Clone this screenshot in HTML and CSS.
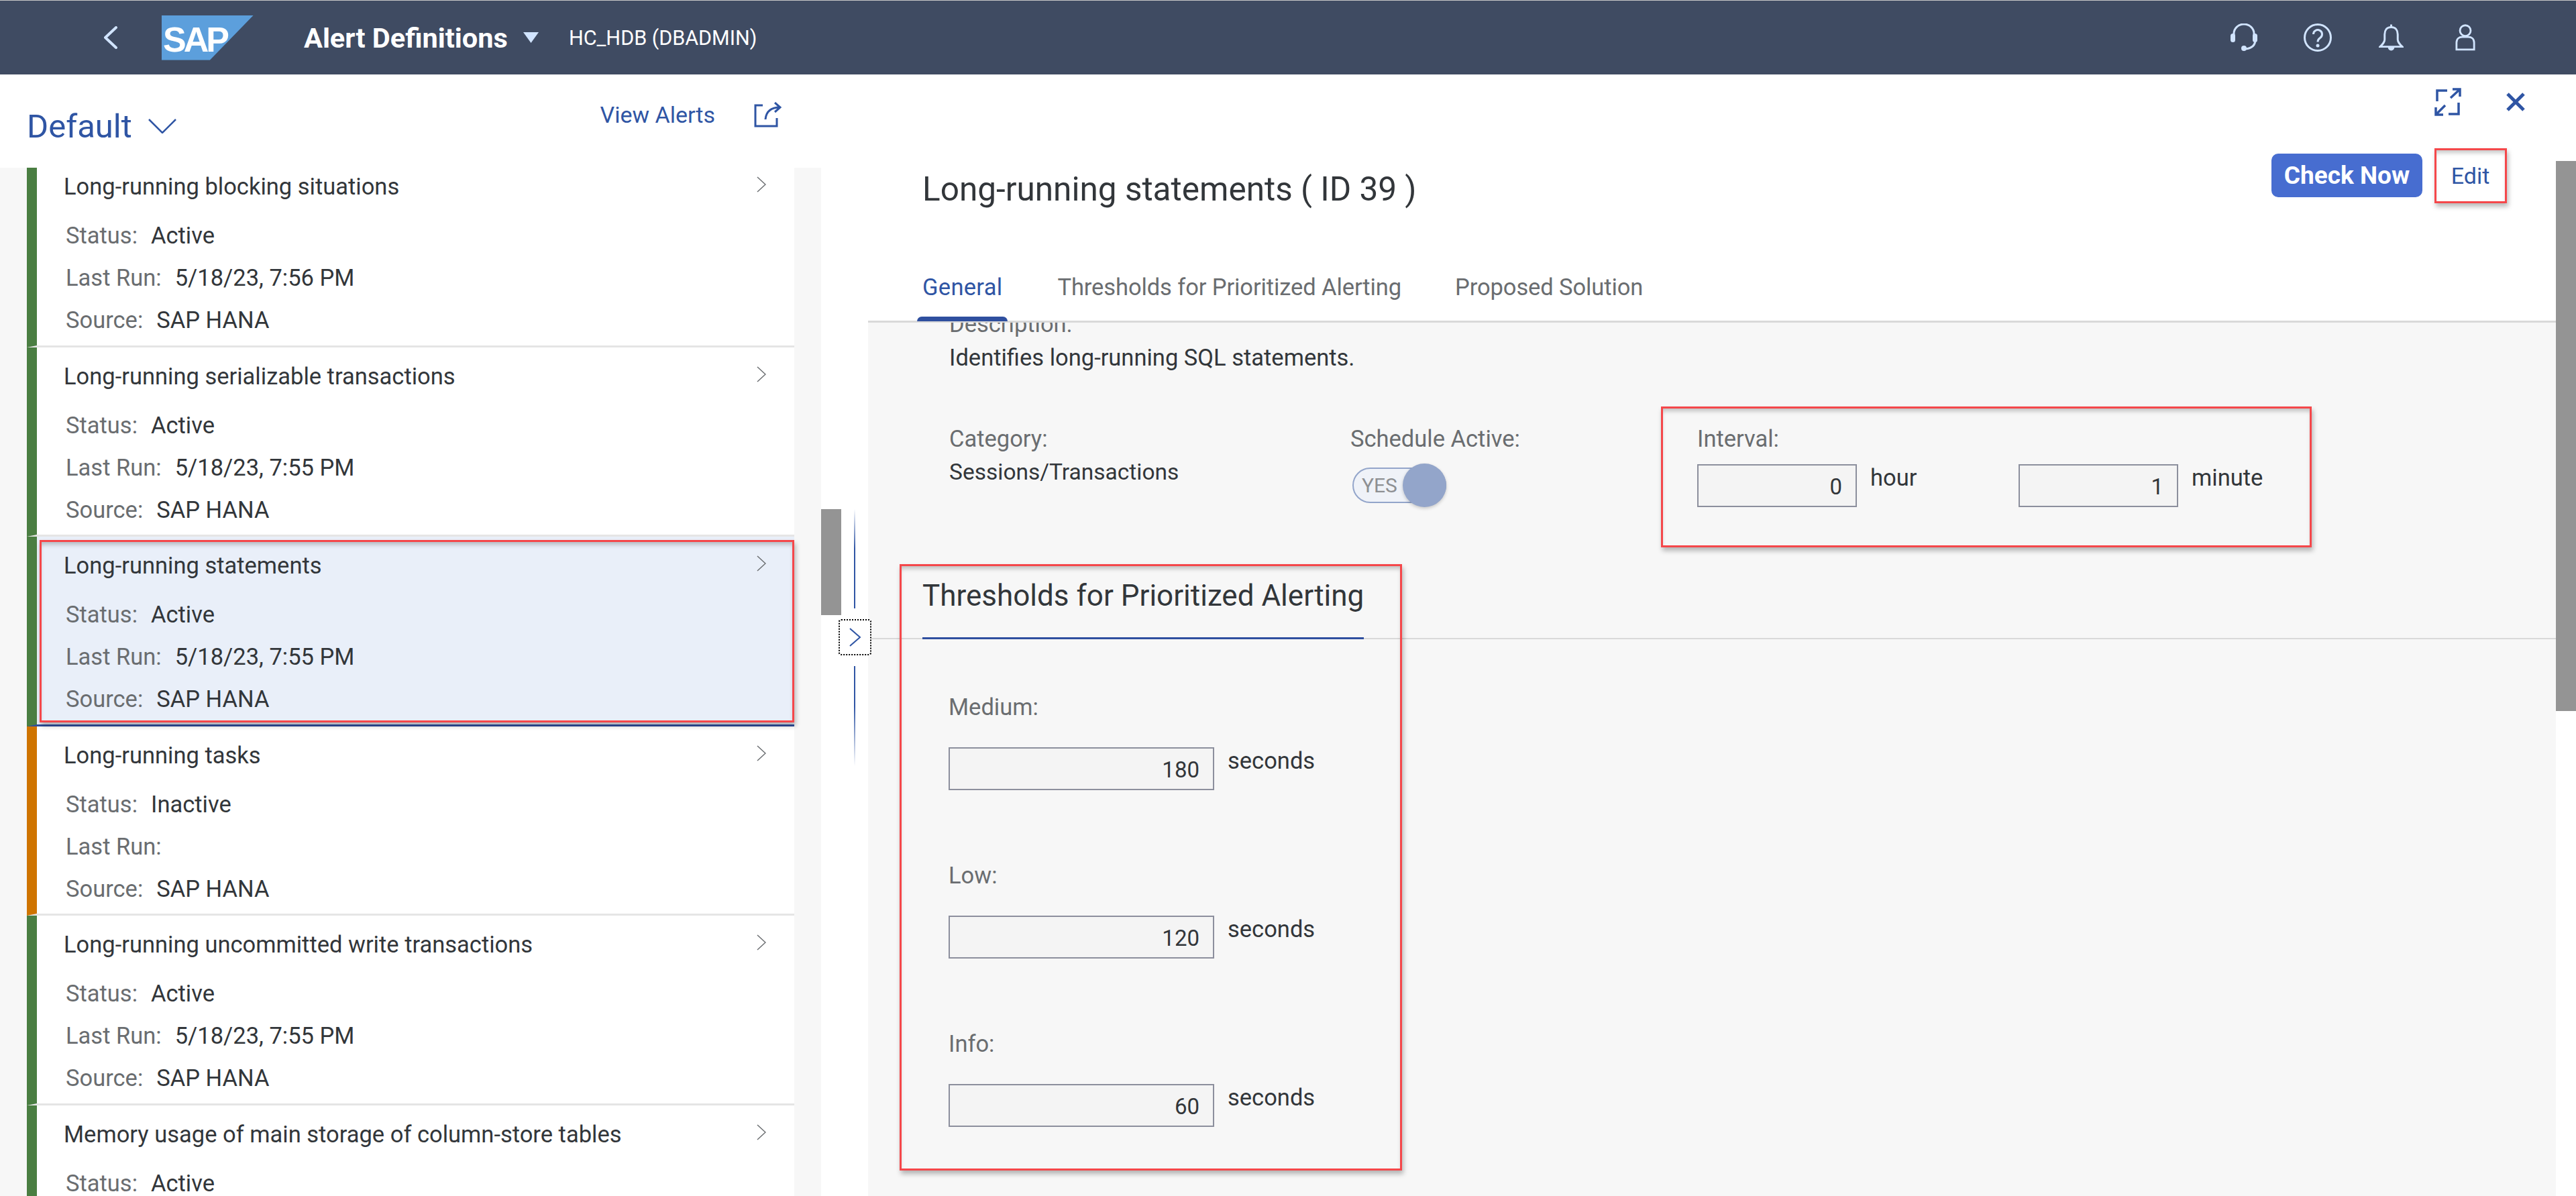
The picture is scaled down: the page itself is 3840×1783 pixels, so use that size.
FILE: index.html
```html
<!DOCTYPE html>
<html lang="en">
<head>
  <meta charset="UTF-8">
  <title>Alert Definitions</title>
  <link rel="stylesheet" href="styles.css">
</head>
<body>

  <header class="shell">
    <svg class="back" viewBox="0 0 20 34"><path d="M18 2 2 17l16 15"/></svg>
    <div class="logo"><span>SAP</span></div>
    <div class="app-title">Alert Definitions</div>
    <svg class="caret" viewBox="0 0 23 16"><path d="M0 0h23L11.500 16z"/></svg>
    <div class="system">HC_HDB (DBADMIN)</div>
    <div class="shell-icons">
      <svg viewBox="0 0 42 42"><path d="M6 20V15a15 14 0 0 1 30 0v5M38 24c0 9-5 13-15 14"/><rect x="1" y="15" width="7" height="13" rx="3.500" class="fill"/><rect x="34" y="15" width="7" height="13" rx="3.500" class="fill"/><circle cx="21" cy="37" r="4" class="fill"/></svg>
      <svg viewBox="0 0 42 42"><circle cx="21" cy="21" r="19.500"/><path d="M14.500 16a6.500 6.500 0 1 1 10 5.500c-2.500 1.700-3.500 3-3.500 6"/><circle cx="21" cy="33" r="2.500" class="fill"/></svg>
      <svg viewBox="0 0 38 42"><path d="M19 5c-7 0-10 5-10 11v8c0 4-3 7-7 11h34c-4-4-7-7-7-11v-8c0-6-3-11-10-11zM19 1v4"/><path d="M14 36a5 5 0 0 0 10 0z" class="fill"/></svg>
      <svg viewBox="0 0 32 42"><circle cx="16" cy="10" r="8.500"/><path d="M2 40V29c0-6 4-9 9-9h10c5 0 9 3 9 9v11z"/></svg>
    </div>
  </header>

  <main class="main">
    <section class="master">
      <div class="master-head">
        <div class="variant">Default <svg viewBox="0 0 42 22"><path d="M1 1l20 20L41 1"/></svg></div>
        <div class="master-actions">
          <span class="link">View Alerts</span>
          <svg class="share" viewBox="0 0 42 38"><path d="M13 5H2v31h32V24M17 26c1-12 9-18 22-18M31 1l8 7-8 7"/></svg>
        </div>
      </div>
      <div class="alert-list">
        <div class="item first">
          <div class="item-title">Long-running blocking situations<svg viewBox="0 0 14 24"><path d="M1 1l12 11L1 23"/></svg></div>
          <div class="item-row"><span>Status:</span>Active</div>
          <div class="item-row"><span>Last Run:</span>5/18/23, 7:56 PM</div>
          <div class="item-row"><span>Source:</span>SAP HANA</div>
        </div>
        <div class="item">
          <div class="item-title">Long-running serializable transactions<svg viewBox="0 0 14 24"><path d="M1 1l12 11L1 23"/></svg></div>
          <div class="item-row"><span>Status:</span>Active</div>
          <div class="item-row"><span>Last Run:</span>5/18/23, 7:55 PM</div>
          <div class="item-row"><span>Source:</span>SAP HANA</div>
        </div>
        <div class="item selected">
          <div class="item-title">Long-running statements<svg viewBox="0 0 14 24"><path d="M1 1l12 11L1 23"/></svg></div>
          <div class="item-row"><span>Status:</span>Active</div>
          <div class="item-row"><span>Last Run:</span>5/18/23, 7:55 PM</div>
          <div class="item-row"><span>Source:</span>SAP HANA</div>
        </div>
        <div class="item inactive">
          <div class="item-title">Long-running tasks<svg viewBox="0 0 14 24"><path d="M1 1l12 11L1 23"/></svg></div>
          <div class="item-row"><span>Status:</span>Inactive</div>
          <div class="item-row"><span>Last Run:</span></div>
          <div class="item-row"><span>Source:</span>SAP HANA</div>
        </div>
        <div class="item">
          <div class="item-title">Long-running uncommitted write transactions<svg viewBox="0 0 14 24"><path d="M1 1l12 11L1 23"/></svg></div>
          <div class="item-row"><span>Status:</span>Active</div>
          <div class="item-row"><span>Last Run:</span>5/18/23, 7:55 PM</div>
          <div class="item-row"><span>Source:</span>SAP HANA</div>
        </div>
        <div class="item">
          <div class="item-title">Memory usage of main storage of column-store tables<svg viewBox="0 0 14 24"><path d="M1 1l12 11L1 23"/></svg></div>
          <div class="item-row"><span>Status:</span>Active</div>
        </div>
      </div>
    </section>

    <div class="splitter"></div>

    <section class="detail">
      <div class="detail-head">
        <div class="win-actions">
          <svg class="expand" viewBox="0 0 40 42"><path d="M19 4H4v16M36 22v17H21M24 15 38 2M27 2h11v11M16 26 2 40M2 29v11h11"/></svg>
          <svg class="close" viewBox="0 0 28 28"><path d="M2 2l24 24M26 2 2 26"/></svg>
        </div>
        <div class="title-row">
          <h1>Long-running statements ( ID 39 )</h1>
          <div class="title-actions">
            <button class="btn-primary">Check Now</button>
            <button class="btn-plain">Edit</button>
          </div>
        </div>
        <nav class="tabs">
          <span class="tab active">General</span>
          <span class="tab">Thresholds for Prioritized Alerting</span>
          <span class="tab">Proposed Solution</span>
        </nav>
      </div>

      <div class="detail-body">
        <div class="label desc-label">Description:</div>
        <div class="value desc-value">Identifies long-running SQL statements.</div>

        <div class="general-row">
          <div class="col-category">
            <div class="label">Category:</div>
            <div class="value category-value">Sessions/Transactions</div>
          </div>
          <div class="col-schedule">
            <div class="label">Schedule Active:</div>
            <div class="toggle"><span>YES</span><i></i></div>
          </div>
          <div>
            <div class="label">Interval:</div>
            <div class="interval">
              <div class="field field-short"><input type="text" value="0" readonly><span>hour</span></div>
              <div class="field field-short"><input type="text" value="1" readonly><span>minute</span></div>
            </div>
          </div>
        </div>

        <div class="section-head"><h2>Thresholds for Prioritized Alerting</h2></div>
        <div class="thresholds">
          <div class="label">Medium:</div>
          <div class="field"><input type="text" value="180" readonly><span>seconds</span></div>
          <div class="label">Low:</div>
          <div class="field"><input type="text" value="120" readonly><span>seconds</span></div>
          <div class="label">Info:</div>
          <div class="field"><input type="text" value="60" readonly><span>seconds</span></div>
        </div>
      </div>
    </section>
  </main>

  <!-- overlays: scrollbars, sash button, red annotation boxes -->
  <div class="thumb thumb-list"></div>
  <div class="thumb thumb-detail"></div>
  <div class="sash sash-top"></div>
  <div class="sash sash-bottom"></div>
  <div class="sash-btn"><svg viewBox="0 0 18 28"><path d="M1 1l15 13L1 27"/></svg></div>
  <div class="callout callout-item"></div>
  <div class="callout callout-edit"></div>
  <div class="callout callout-interval"></div>
  <div class="callout callout-thresholds"></div>

</body>
</html>
```

FILE: styles.css
```css
* { box-sizing: border-box; }
html, body { margin: 0; padding: 0; }
body { width: 3840px; height: 1783px; overflow: hidden; position: relative; background: #fff; font-family: Roboto, "Liberation Sans", sans-serif; font-size: 34.500px; color: #32363a; }
svg { display: block; fill: none; }

/* shell bar */
.shell { height: 111px; background: #3f4b62; border-top: 1px solid #c8c8c8; display: flex; align-items: center; color: #fff; }
.shell svg path, .shell svg circle { stroke: #d1e4ff; stroke-width: 3; }
.shell svg .fill { fill: #d1e4ff; stroke: none; }
.back { width: 20px; height: 34px; margin-left: 155px; }
.shell .back path { stroke-width: 4; stroke-linecap: round; stroke-linejoin: round; }
.logo { width: 137px; height: 67px; margin-left: 66px; background: #5c9fdc; clip-path: polygon(0 0, 100% 0, 52.500% 100%, 0 100%); }
.logo span { display: block; margin: 9px 0 0 2px; font: bold 52px/54px "Liberation Sans", sans-serif; letter-spacing: -4px; color: #fff; }
.app-title { margin-left: 75px; width: 306px; white-space: nowrap; font-size: 41.500px; font-weight: 700; }
.caret { width: 23px; height: 16px; margin-left: 21px; }
.shell .caret path { fill: #d1e4ff; stroke: none; }
.system { margin-left: 45px; font-size: 30.500px; }
.shell-icons { margin-left: auto; margin-right: 150px; display: flex; gap: 70px; align-items: center; }
.shell-icons svg { height: 42px; width: 42px; }
.shell-icons svg:nth-child(1) { margin-right: -2px; }
.shell-icons svg:nth-child(3) { width: 37px; }
.shell-icons svg:nth-child(4) { width: 30px; margin-left: 7px; }

.main { display: flex; height: 1672px; }

/* left list */
.master { width: 1224px; display: flex; flex-direction: column; }
.master-head { height: 139px; display: flex; justify-content: space-between; padding: 0 58px 0 40px; color: #2f55a4; }
.variant { display: flex; align-items: center; gap: 24px; font-size: 49px; height: 154px; }
.variant svg { width: 42px; height: 22px; }
.variant svg path { stroke: #2f55a4; stroke-width: 2.500; }
.master-actions { display: flex; align-items: center; gap: 58px; height: 120px; }
.link { font-size: 34px; }
.share { width: 42px; height: 38px; }
.share path { stroke: #2f55a4; stroke-width: 3; }
.alert-list { flex: 1; background: #f7f7f7; padding: 0 40px; overflow: hidden; }
.item { height: 282.500px; background: #fff; border-left: 15px solid #4a7e42; border-bottom: 3px solid #e5e5e5; padding: 21px 42px 0 40px; }
.item.first { margin-top: -15px; }
.item.inactive { border-left-color: #cf7400; }
.item.selected { background: #e9eff9; border-bottom-color: #2f4f9f; }
.item-title { display: flex; justify-content: space-between; line-height: 44px; height: 44px; margin-bottom: 20px; }
.item-title svg { width: 14px; height: 24px; margin-top: 7px; }
.item-title svg path { stroke: #6a6d70; stroke-width: 1.500; }
.item-row { height: 63px; line-height: 63px; padding-left: 3px; }
.item-row span { color: #6a6d70; margin-right: 20px; }

.splitter { width: 70px; }

/* right detail */
.detail { flex: 1; display: flex; flex-direction: column; min-width: 0; }
.detail-head { height: 367px; padding-left: 81px; }
.win-actions { display: flex; justify-content: flex-end; align-items: center; gap: 67px; padding: 20px 76px 0 0; height: 62px; }
.win-actions svg path { stroke: #2f55a4; }
.expand { width: 40px; height: 42px; }
.expand path { stroke-width: 3.500; }
.close { width: 28px; height: 28px; }
.close path { stroke-width: 5; }
.title-row { display: flex; justify-content: space-between; height: 150px; }
h1 { margin: 77px 0 0; font-size: 49.500px; font-weight: 400; line-height: 64px; }
.title-actions { display: flex; align-items: flex-start; padding: 56px 111px 0 0; gap: 25px; }
.title-actions button { font-family: inherit; height: 65px; border: 0; cursor: pointer; }
.btn-primary { width: 225px; padding: 0; background: #476dd0; color: #fff; font-size: 37px; font-weight: 700; border-radius: 10px; }
.btn-plain { width: 93px; padding: 0; background: none; color: #2f55a4; font-size: 34px; }
.tabs { display: flex; gap: 80px; margin-top: 73px; }
.tab { position: relative; height: 82px; line-height: 64px; color: #6a6d70; letter-spacing: -.1px; }
.tab.active { color: #2f55a4; margin-right: 2px; letter-spacing: .3px; }
.tab.active::after { content: ""; position: absolute; left: -8px; right: -8px; bottom: -1px; height: 7px; background: #2f4f9f; border-radius: 7px 7px 0 0; }

.detail-body { flex: 1; margin-right: 30px; background: #f7f7f7; border-top: 3px solid #d9d9d9; overflow: hidden; }
.label { height: 50px; line-height: 50px; color: #6a6d70; }
.value { height: 50px; line-height: 50px; }
.desc-label { margin: -23px 0 0 121px; }
.desc-value { margin: 0 0 0 121px; }
.category-value { font-size: 33.500px; }
.general-row { display: flex; margin: 71px 0 0 121px; height: 172px; }
.col-category { width: 598px; }
.col-schedule { width: 517px; }
.toggle { position: relative; width: 140px; height: 53px; margin: 18px 0 0 3px; background: #eff2f8; border: 2px solid #93a5ca; border-radius: 27px; color: #8d8f92; font-size: 30px; line-height: 49px; padding-left: 12px; }
.toggle i { position: absolute; right: -2px; top: -8px; width: 65px; height: 65px; border-radius: 50%; background: #93a5ca; box-shadow: 0 2px 5px rgba(0,0,0,.2); }
.interval { display: flex; margin-top: 13px; }
.field { display: flex; align-items: flex-start; }
.field input { width: 396px; height: 64px; border: 2px solid #8c8f9d; background: #f4f4f4; text-align: right; padding: 3px 20px 0 0; font-family: inherit; font-size: 33px; color: #32363a; border-radius: 0; outline: none; }
.field span { margin-left: 20px; line-height: 40px; }
.field-short { width: 479px; }
.field-short input { width: 238px; }
.section-head { display: flex; height: 152px; padding-left: 81px; border-bottom: 2px solid #d9d9d9; }
h2 { height: 152px; margin: 0; padding-top: 57px; border-bottom: 3px solid #2f4f9f; font-size: 44px; font-weight: 400; line-height: 60px; white-space: nowrap; }
.thresholds { padding: 76px 0 0 120px; }
.thresholds .field { margin: 35px 0 102px; }

/* overlays */
.thumb { position: absolute; background: #949494; }
.thumb-list { left: 1224px; top: 759px; width: 30px; height: 158px; }
.thumb-detail { left: 3810px; top: 240px; width: 30px; height: 820px; }
.sash { position: absolute; left: 1273px; width: 2px; }
.sash-top { top: 759px; height: 148px; background: linear-gradient(#fff, #2f55a4 40%); }
.sash-bottom { top: 993px; height: 149px; background: linear-gradient(#2f55a4 40%, #fff); }
.sash-btn { position: absolute; left: 1250px; top: 923px; width: 49px; height: 54px; background: #fff; border: 2px dotted #000; border-radius: 4px; display: flex; align-items: center; justify-content: center; }
.sash-btn svg { width: 18px; height: 28px; }
.sash-btn svg path { stroke: #2f55a4; stroke-width: 2; }
.callout { position: absolute; border: 3px solid #f5474a; box-shadow: 2px 5px 7px rgba(0,0,0,.28), inset 0 6px 6px -2px rgba(0,0,0,.22); }
.callout-item { left: 59px; top: 805px; width: 1125px; height: 272px; }
.callout-edit { left: 3629px; top: 221px; width: 108px; height: 82px; }
.callout-interval { left: 2476px; top: 606px; width: 970px; height: 210px; }
.callout-thresholds { left: 1341px; top: 841px; width: 749px; height: 904px; }
```
